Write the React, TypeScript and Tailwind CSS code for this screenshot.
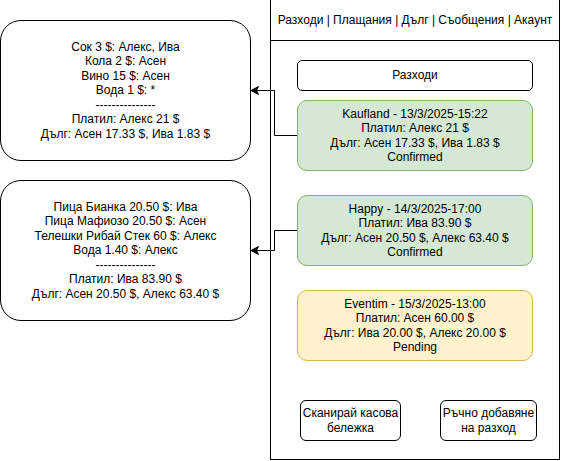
function Connectors() {
	return (
		<svg
			className="absolute inset-0 pointer-events-none"
			width="561"
			height="461"
			viewBox="0 0 561 461">
			<path
				d="M297 135.5 H274.5 V90.5 H256"
				fill="none"
				stroke="#000"
				strokeWidth="1"
			/>
			<path
				d="M251 90.5 L258.5 86.5 L256.5 90.5 L258.5 94.5 Z"
				fill="#000"
				stroke="#000"
				strokeWidth="1"
			/>
			<path
				d="M297 230.5 H274.5 V250.5 H256"
				fill="none"
				stroke="#000"
				strokeWidth="1"
			/>
			<path
				d="M251 250.5 L258.5 246.5 L256.5 250.5 L258.5 254.5 Z"
				fill="#000"
				stroke="#000"
				strokeWidth="1"
			/>
		</svg>
	);
}

type Expense = {
	title: string;
	paid: string;
	debt: string;
	status: string;
	pending?: boolean;
};

const expenses: Expense[] = [
	{
		title: 'Kaufland - 13/3/2025-15:22',
		paid: 'Платил: Алекс 21 $',
		debt: 'Дълг: Асен 17.33 $, Ива 1.83 $',
		status: 'Confirmed',
	},
	{
		title: 'Happy - 14/3/2025-17:00',
		paid: 'Платил: Ива 83.90 $',
		debt: 'Дълг: Асен 20.50 $, Алекс 63.40 $',
		status: 'Confirmed',
	},
	{
		title: 'Eventim - 15/3/2025-13:00',
		paid: 'Платил: Асен 60.00 $',
		debt: 'Дълг: Ива 20.00 $, Алекс 20.00 $',
		status: 'Pending',
		pending: true,
	},
];

function ReceiptBox({ lines }: { lines: string[] }) {
	return (
		<div className="w-[251px] h-[141px] border border-black rounded-[21px] flex flex-col items-center justify-center text-center">
			{lines.map((l, i) => (
				<p key={i}>{l}</p>
			))}
		</div>
	);
}

export default function App() {
	return (
		<div className="relative w-[561px] h-[461px] bg-white text-black text-[12px] leading-[14.4px] font-['Liberation_Sans',Arial,sans-serif] flex">
			{/* <Receipts> */}
			<div className="flex flex-col pt-[20px] gap-[19px]">
				<ReceiptBox
					lines={[
						'Сок 3 $: Алекс, Ива',
						'Кола 2 $: Асен',
						'Вино 15 $: Асен',
						'Вода 1 $: *',
						'---------------',
						'Платил: Алекс 21 $',
						'Дълг: Асен 17.33 $, Ива 1.83 $',
					]}
				/>
				<ReceiptBox
					lines={[
						'Пица Бианка 20.50 $: Ива',
						'Пица Мафиозо 20.50 $: Асен',
						'Телешки Рибай Стек 60 $: Алекс',
						'Вода 1.40 $: Алекс',
						'---------------',
						'Платил: Ива 83.90 $',
						'Дълг: Асен 20.50 $, Алекс 63.40 $',
					]}
				/>
			</div>
			{/* </Receipts> */}

			{/* <Phone> */}
			<div className="ml-[19px] w-[290px] h-[460px] border-x border-b border-black flex flex-col">
				<div className="h-[41px] border-b border-black flex items-center justify-center">
					Разходи | Плащания | Дълг | Съобщения | Акаунт
				</div>
				<div className="px-[26px] flex flex-col">
					<div className="mt-[19px] h-[31px] border border-black rounded-[5px] flex items-center justify-center">
						Разходи
					</div>
					{expenses.map((e, i) => (
						<div
							key={i}
							className={`${i === 0 ? 'mt-[9px]' : 'mt-[24px]'} h-[71px] border rounded-[10px] flex flex-col items-center justify-center text-center ${
								e.pending
									? 'bg-[#fff2cc] border-[#d6b656]'
									: 'bg-[#d5e8d4] border-[#82b366]'
							}`}>
							<p>{e.title}</p>
							<p>{e.paid}</p>
							<p>{e.debt}</p>
							<p>{e.status}</p>
						</div>
					))}
				</div>
				<div className="mt-[39px] pl-[29px] pr-[22px] flex justify-between">
					<div className="w-[101px] h-[41px] border border-black rounded-[6px] flex items-center justify-center text-center">
						Сканирай касова
						<br />
						бележка
					</div>
					<div className="w-[97px] h-[41px] border border-black rounded-[6px] flex items-center justify-center text-center">
						Ръчно добавяне
						<br />
						на разход
					</div>
				</div>
			</div>
			{/* </Phone> */}

			<Connectors />
		</div>
	);
}
